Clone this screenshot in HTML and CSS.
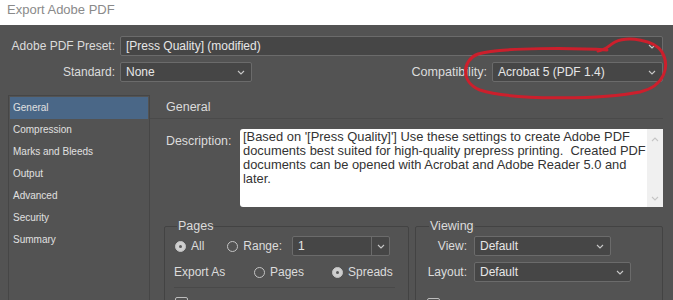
FILE: index.html
```html
<!DOCTYPE html>
<html lang="en">
<head>
  <meta charset="UTF-8">
  <title>Export Adobe PDF</title>
  <link rel="stylesheet" href="styles.css">
</head>
<body>
  <div class="titlebar">Export Adobe PDF</div>

  <div class="dialog">
    <!-- preset + standard rows -->
    <div class="row">
      <span class="lbl">Adobe PDF Preset:</span>
      <div class="select grow">[Press Quality] (modified)
        <svg class="chev" width="8" height="5" viewBox="0 0 8 5"><path d="M1 1l3 3 3-3" /></svg>
      </div>
    </div>
    <div class="row">
      <span class="lbl">Standard:</span>
      <div class="select standard">None
        <svg class="chev" width="8" height="5" viewBox="0 0 8 5"><path d="M1 1l3 3 3-3" /></svg>
      </div>
      <span class="lbl compat-lbl">Compatibility:</span>
      <div class="select compat">Acrobat 5 (PDF 1.4)
        <svg class="chev" width="8" height="5" viewBox="0 0 8 5"><path d="M1 1l3 3 3-3" /></svg>
      </div>
    </div>

    <div class="body">
      <ul class="sidebar">
        <li class="active">General</li>
        <li>Compression</li>
        <li>Marks and Bleeds</li>
        <li>Output</li>
        <li>Advanced</li>
        <li>Security</li>
        <li>Summary</li>
      </ul>

      <div class="panel">
        <div class="panel-title">General</div>

        <div class="desc-row">
          <span class="desc-lbl">Description:</span>
          <div class="desc">
            <p>[Based on '[Press Quality]'] Use these settings to create Adobe PDF documents best suited for high-quality prepress printing.&nbsp; Created PDF documents can be opened with Acrobat and Adobe Reader 5.0 and later.</p>
            <div class="scrollbar">
              <svg width="8" height="5" viewBox="0 0 8 5"><path d="M1 4l3-3 3 3" /></svg>
              <svg width="8" height="5" viewBox="0 0 8 5"><path d="M1 1l3 3 3-3" /></svg>
            </div>
          </div>
        </div>

        <div class="groups">
          <fieldset class="group pages">
            <legend>Pages</legend>
            <div class="grp-row">
              <span class="radio on"></span><span class="opt">All</span>
              <span class="radio range-radio"></span><span class="opt">Range:</span>
              <div class="combo">
                <span class="combo-val">1</span>
                <span class="combo-btn">
                  <svg class="chev" width="8" height="5" viewBox="0 0 8 5"><path d="M1 1l3 3 3-3" /></svg>
                </span>
              </div>
            </div>
            <div class="grp-row">
              <span class="export-lbl">Export As</span>
              <span class="radio"></span><span class="opt">Pages</span>
              <span class="radio spreads-radio on"></span><span class="opt">Spreads</span>
            </div>
            <div class="sep"></div>
            <div class="check-row"><span class="check"></span></div>
          </fieldset>

          <fieldset class="group viewing">
            <legend>Viewing</legend>
            <div class="grp-row">
              <span class="vlbl">View:</span>
              <div class="select view-sel">Default
                <svg class="chev" width="8" height="5" viewBox="0 0 8 5"><path d="M1 1l3 3 3-3" /></svg>
              </div>
            </div>
            <div class="grp-row">
              <span class="vlbl">Layout:</span>
              <div class="select layout-sel">Default
                <svg class="chev" width="8" height="5" viewBox="0 0 8 5"><path d="M1 1l3 3 3-3" /></svg>
              </div>
            </div>
            <div class="check-row"><span class="check"></span></div>
          </fieldset>
        </div>
      </div>
    </div>
  </div>

  <!-- hand drawn red mark over the compatibility menu -->
  <svg class="scribble" width="673" height="300" viewBox="0 0 673 300">
    <path d="M607 50 C580 48 500 47 478 54 C462 60 460 82 480 90 C510 100 600 100 640 92 C665 86 670 66 662 52 C655 40 628 36 615 42 C608 46 606 50 598 51" />
  </svg>
</body>
</html>
```

FILE: styles.css
```css
body {
  margin: 0;
  width: 673px;
  height: 300px;
  overflow: hidden;
  position: relative;
  font-family: "Liberation Sans", Arial, sans-serif;
  font-size: 12px;
  color: #dcdcdc;
  background: #535353;
}
.titlebar {
  height: 25px;
  background: #fff;
  color: #8a8a8a;
  font-size: 13px;
  line-height: 20px;
  padding-left: 7px;
  box-sizing: border-box;
}
.dialog {
  padding: 11px 10px 0 8px;
}
.row {
  display: flex;
  align-items: center;
  height: 20px;
  margin-bottom: 6px;
}
.lbl {
  width: 107px;
  text-align: right;
  margin-right: 5px;
  white-space: nowrap;
}
.select {
  position: relative;
  height: 20px;
  box-sizing: border-box;
  background: #464646;
  border: 1px solid #6b6b6b;
  border-radius: 2px;
  padding-left: 5px;
  line-height: 18px;
  color: #e6e6e6;
  white-space: nowrap;
}
.select .chev {
  position: absolute;
  right: 6px;
  top: 7px;
}
.chev path {
  fill: none;
  stroke: #c8c8c8;
  stroke-width: 1.1;
}
.grow { flex: 1; }
.standard { width: 132px; }
.compat-lbl {
  width: auto;
  margin-left: auto;
  font-size: 12.6px;
}
.compat { width: 171px; }

.body {
  display: flex;
  margin-top: 13px;
}
.sidebar {
  list-style: none;
  margin: 0;
  padding: 1px 1px 0;
  width: 142px;
  height: 220px;
  box-sizing: border-box;
  border: 1px solid #464646;
  background: #535353;
  font-size: 10px;
}
.sidebar li {
  height: 22px;
  line-height: 22px;
  padding-left: 3px;
  color: #e0e0e0;
}
.sidebar li.active {
  background: #4a6787;
}
.panel {
  flex: 1;
  padding-left: 15px;
}
.panel-title {
  height: 23px;
  line-height: 24px;
  border-bottom: 1px solid #4a4a4a;
  margin-left: -15px;
  padding-left: 16px;
  font-size: 12.5px;
}
.desc-row {
  display: flex;
  margin-top: 10px;
}
.desc-lbl {
  width: 74px;
  line-height: 24px;
  padding-left: 1px;
  font-size: 12.4px;
}
.desc {
  flex: 1;
  height: 78px;
  background: #fff;
  border-radius: 3px;
  display: flex;
  color: #333;
}
.desc p {
  flex: 1;
  margin: 0;
  padding: 1px 0 0 3px;
  font-size: 12.9px;
  line-height: 14px;
}
.scrollbar {
  width: 16px;
  display: flex;
  flex-direction: column;
  justify-content: space-between;
  align-items: center;
  padding: 8px 0 6px;
  background: #f0f0f0;
}
.scrollbar path {
  fill: none;
  stroke: #c6c6c6;
  stroke-width: 1.1;
}

.groups {
  display: flex;
  gap: 6px;
  margin-top: 12px;
  margin-left: -1px;
}
.group {
  margin: 0;
  padding: 0 9px;
  border: 1px solid #434343;
  border-radius: 2px;
  height: 120px;
}
.group legend {
  margin-left: 3px;
  padding: 0 1px;
  font-size: 12.5px;
  line-height: 14px;
}
.pages { width: 245px; box-sizing: border-box; }
.viewing { flex: 1; padding-left: 10px; }
.grp-row {
  display: flex;
  align-items: center;
  height: 20px;
  margin-bottom: 6px;
}
.pages .grp-row:first-of-type { margin-top: 3px; }
.radio {
  width: 11px;
  height: 11px;
  box-sizing: border-box;
  border: 1px solid #c4c4c4;
  border-radius: 50%;
  margin-right: 5px;
  position: relative;
}
.pages .grp-row:first-of-type .radio:first-child { margin-left: 1px; }
.radio.on {
  background: #cfcfcf;
}
.radio.on::after {
  content: "";
  position: absolute;
  left: 3px;
  top: 3px;
  width: 3px;
  height: 3px;
  border-radius: 50%;
  background: #5a5a5a;
}
.opt { margin-right: 6px; }
.range-radio { margin-left: 17px; }
.combo {
  display: flex;
  height: 20px;
  width: 98px;
  margin-left: 4px;
  box-sizing: border-box;
  border: 1px solid #6b6b6b;
  border-radius: 2px;
  background: #464646;
}
.combo-val {
  flex: 1;
  padding-left: 5px;
  line-height: 18px;
  color: #e6e6e6;
}
.combo-btn {
  width: 17px;
  border-left: 1px solid #6b6b6b;
  display: flex;
  align-items: center;
  justify-content: center;
}
.export-lbl { width: 80px; }
.spreads-radio { margin-left: 22px; }
.sep {
  height: 1px;
  background: #494949;
  margin: -1px 4px 0 0;
}
.check-row {
  display: flex;
  padding-top: 9px;
}
.viewing .check-row { padding-top: 10px; }
.check {
  width: 11px;
  height: 11px;
  border: 1px solid #bdbdbd;
  border-radius: 2px;
  margin-left: 1px;
}
.vlbl {
  width: 41px;
  text-align: right;
  margin-right: 7px;
}
.viewing .grp-row:first-of-type { margin-top: 3px; }
.view-sel { width: 137px; }
.layout-sel { width: 157px; }

.scribble {
  position: absolute;
  left: 0;
  top: 0;
  pointer-events: none;
}
.scribble path {
  fill: none;
  stroke: #cc1f2c;
  stroke-width: 3;
  stroke-linecap: round;
}
```
